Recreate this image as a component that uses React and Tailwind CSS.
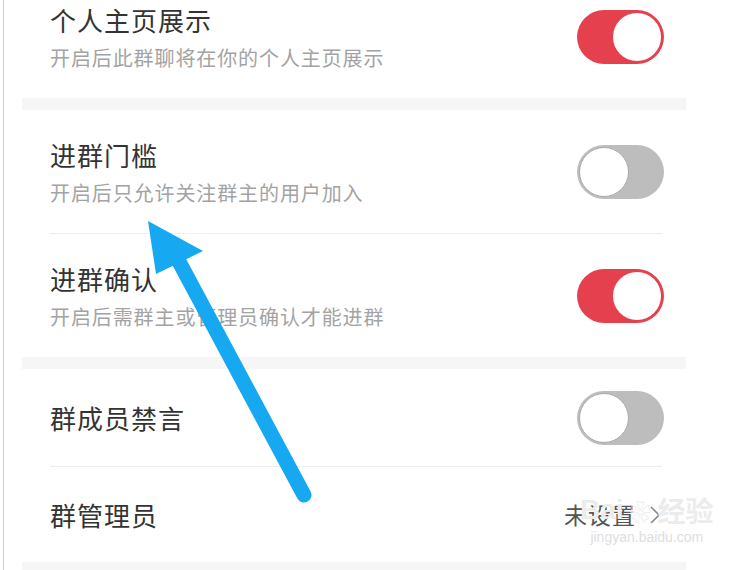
const FONT = "font-['Noto_Sans_CJK_SC','Noto_Sans',sans-serif]";

function Toggle({ on }) {
  return (
    <div
      className={
        on
          ? "flex h-[54px] w-[87px] shrink-0 items-center justify-end rounded-full bg-[#e4404d] p-[3px]"
          : "flex h-[54px] w-[87px] shrink-0 items-center justify-start rounded-full bg-[#bdbdbd] p-[2px]"
      }
    >
      <span
        className={
          on
            ? "h-[48px] w-[48px] rounded-full bg-white"
            : "h-[50px] w-[50px] rounded-full border-[1.5px] border-[#a9a9a9] bg-white"
        }
      />
    </div>
  );
}

function Row({ title, desc, on, h }) {
  return (
    <div className={`flex items-center justify-between pl-[28px] pr-[22px] ${h}`}>
      <div className="flex flex-col">
        <span className="text-[26px] leading-[32px] tracking-[1px] text-[#333]">{title}</span>
        {desc && (
          <span className="mt-[10px] text-[20px] leading-[24px] tracking-[0.9px] text-[#a3a3a3]">
            {desc}
          </span>
        )}
      </div>
      {on !== undefined && <Toggle on={on} />}
      {on === undefined && (
        <div className="flex items-center gap-[14px] pr-[4px] text-[23px] text-[#555]">
          <span className="tracking-[1px]">未设置</span>
          <svg width="10" height="18" viewBox="0 0 10 18" fill="none" stroke="#888" strokeWidth="1.6">
            <polyline points="1 1 9 9 1 17" />
          </svg>
        </div>
      )}
    </div>
  );
}

const Band = () => <div className="h-[12px] bg-[#f6f6f6]" />;
const Divider = () => <div className="ml-[28px] mr-[24px] h-px bg-[#eeeeee]" />;

export default function App() {
  return (
    <div className={`relative h-[570px] w-[730px] overflow-hidden bg-white ${FONT}`}>
      <div className="ml-[3px] flex h-full flex-col border-l border-[#cfcfcf] pl-[18px]">
        <div className="-mt-[25px] w-[664px]">
          <Row h="h-[123px]" title="个人主页展示" desc="开启后此群聊将在你的个人主页展示" on={true} />
          <Band />
          <Row h="h-[123px]" title="进群门槛" desc="开启后只允许关注群主的用户加入" on={false} />
          <Divider />
          <Row h="h-[123px]" title="进群确认" desc="开启后需群主或管理员确认才能进群" on={true} />
          <Band />
          <Row h="h-[97px]" title="群成员禁言" on={false} />
          <Divider />
          <Row h="h-[95px]" title="群管理员" />
          <div className="h-[40px] bg-[#f6f6f6]" />
        </div>
      </div>

      {/* annotation arrow */}
      <svg className="pointer-events-none absolute left-0 top-0" width="730" height="570">
        <line x1="176" y1="256" x2="304" y2="495" stroke="#16a9f2" strokeWidth="15" strokeLinecap="round" />
        <polygon points="148,221 203,251 156,274" fill="#16a9f2" />
      </svg>

      {/* watermark */}
      <div className="pointer-events-none absolute left-[580px] top-[496px] flex flex-col items-center leading-none">
        <span className="flex items-center gap-[6px] text-[28px] font-bold text-[#ececec]">
          <span className="font-['Liberation_Sans',sans-serif]">Bai</span>
          <span className="text-[22px]">❀</span>
          <span>经验</span>
        </span>
        <span className="mt-[6px] font-['Liberation_Sans',sans-serif] text-[14px] text-[#dedede]">
          jingyan.baidu.com
        </span>
      </div>
    </div>
  );
}
